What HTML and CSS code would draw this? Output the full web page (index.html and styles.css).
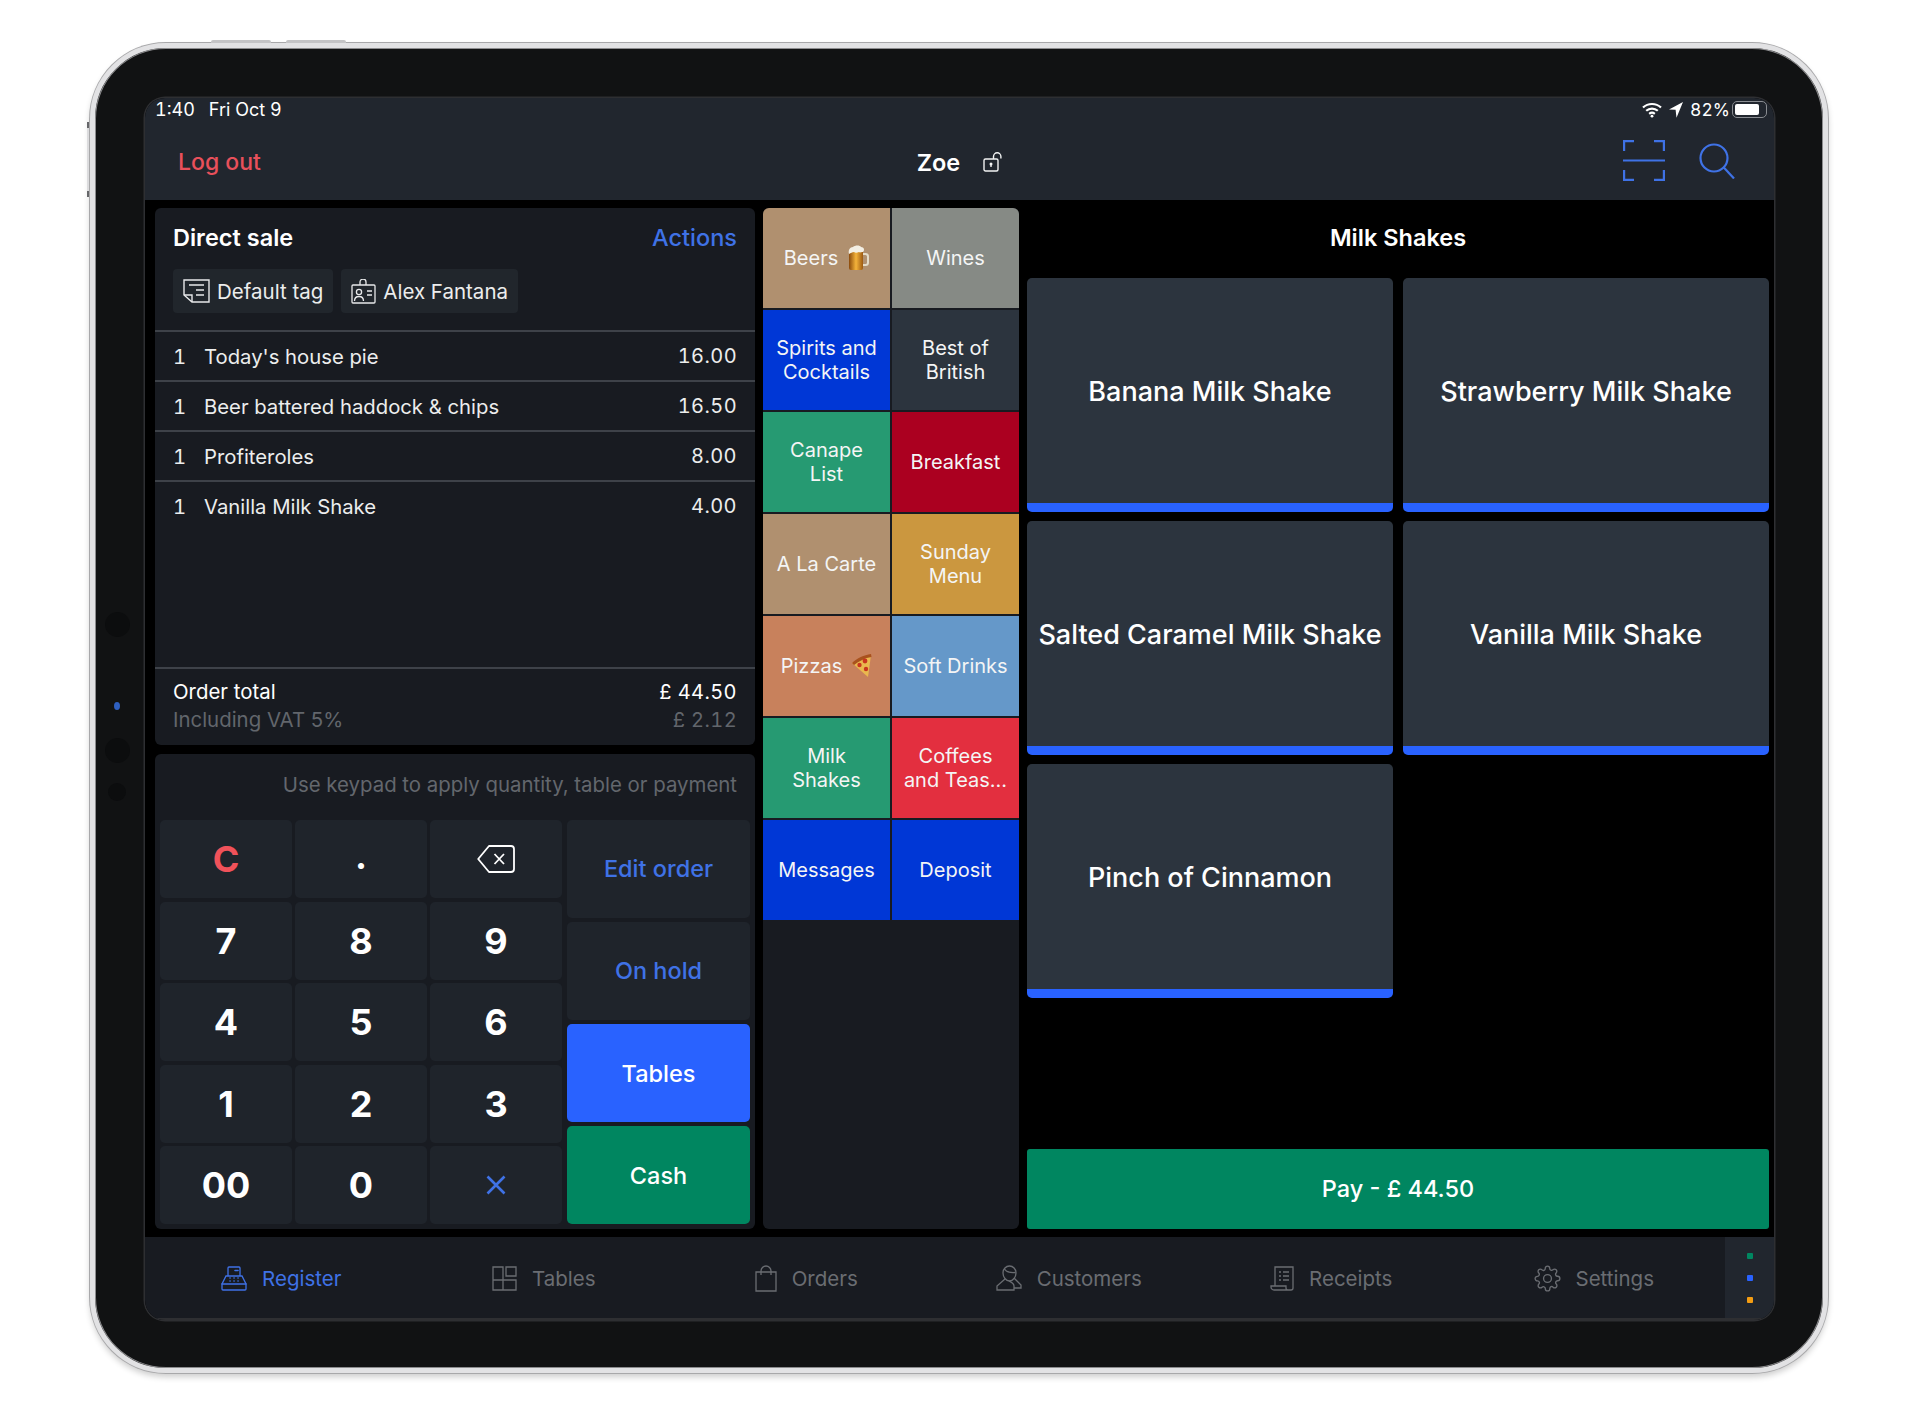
FILE: index.html
```html
<!DOCTYPE html>
<html lang="en">

<head>
    <meta charset="UTF-8">
    <meta name="viewport" content="width=device-width, initial-scale=1.0">
    <title>Register</title>
    <link rel="stylesheet" href="styles.css">
</head>

<body>
    <div class="ipad">
        <span class="hw-btn hw-top hw-top1"></span>
        <span class="hw-btn hw-top hw-top2"></span>
        <span class="hw-btn hw-left"></span>
        <span class="sensor sensor1"></span>
        <span class="sensor sensor2"></span>
        <span class="sensor sensor3"></span>
        <span class="sensor-cam"></span>

        <div class="screen">
            <header class="top">
                <div class="status">
                    <div class="status-time"><span>1:40</span><span>Fri Oct 9</span></div>
                    <div class="status-right">
                        <svg width="20" height="16" viewBox="0 0 20 16" fill="none" stroke="#fff" stroke-width="2.2">
                            <path d="M1 5.5C6 .8 14 .8 19 5.5" />
                            <path d="M4.2 8.8c3.3-3 8.3-3 11.6 0" />
                            <path d="M7.2 11.8c1.6-1.3 4-1.3 5.6 0" />
                            <circle cx="10" cy="14.2" r="1.4" fill="#fff" stroke="none" />
                        </svg>
                        <svg class="status-arrow" width="14" height="16" viewBox="0 0 14 16" fill="#fff">
                            <path d="M14 0 0 7.4l6.6.4.9 8z" />
                        </svg>
                        <span>82%</span>
                        <span class="battery"><span class="battery-fill"></span></span>
                    </div>
                </div>
                <nav class="nav">
                    <a class="logout">Log out</a>
                    <div class="user">
                        <span>Zoe</span>
                        <svg width="20" height="20" viewBox="0 0 20 20" fill="none" stroke="#f2f3f3" stroke-width="1.4">
                            <rect x="1" y="7" width="14" height="12" rx="1.5" />
                            <path d="M10.5 7V4.5a3.7 3.7 0 0 1 7.4 0v2" />
                            <circle cx="8" cy="12" r="1.5" fill="#f2f3f3" stroke="none" />
                            <path d="M8 12v3" />
                        </svg>
                    </div>
                    <div class="nav-icons">
                        <svg width="42" height="41" viewBox="0 0 42 41" fill="none" stroke="#3f72e6" stroke-width="2.2">
                            <path d="M1.100 11V1.100H11M31 1.100h9.900V11M1.100 30v9.900H11M31 39.900h9.900V30" />
                            <path d="M0 20.500h42" />
                        </svg>
                        <svg width="36" height="36" viewBox="0 0 36 36" fill="none" stroke="#3f72e6" stroke-width="2.2">
                            <circle cx="15" cy="15" r="13.5" />
                            <path d="M24.800 24.500 35 35.500" />
                        </svg>
                    </div>
                </nav>
            </header>

            <main class="main">
                <div class="left-col">
                    <section class="order">
                        <div class="order-head">
                            <div class="order-title">
                                <b>Direct sale</b>
                                <a class="link">Actions</a>
                            </div>
                            <div class="chips">
                                <span class="chip">
                                    <svg width="27" height="24" viewBox="0 0 27 24" fill="none" stroke="#e8e9ea" stroke-width="1.4">
                                        <path d="M1 1h25v22H9l-8-7z" />
                                        <path d="M1 16h8v7" />
                                        <path d="M6 6h15M13 11h8M13 16h8" />
                                    </svg>
                                    Default tag
                                </span>
                                <span class="chip">
                                    <svg width="25" height="25" viewBox="0 0 25 25" fill="none" stroke="#e8e9ea" stroke-width="1.3">
                                        <rect x="1" y="6" width="23" height="18" rx="1" />
                                        <path d="M9 6V3a3 3 0 0 1 6 0v3" />
                                        <circle cx="8" cy="13" r="2.6" />
                                        <path d="M3.500 22c0-6 9-6 9 0M16 12h5M16 16h5" />
                                    </svg>
                                    Alex Fantana
                                </span>
                            </div>
                        </div>
                        <ul class="lines">
                            <li><span class="qty">1</span><span class="name">Today's house pie</span><span class="num">16.00</span></li>
                            <li><span class="qty">1</span><span class="name">Beer battered haddock &amp; chips</span><span class="num">16.50</span></li>
                            <li><span class="qty">1</span><span class="name">Profiteroles</span><span class="num">8.00</span></li>
                            <li><span class="qty">1</span><span class="name">Vanilla Milk Shake</span><span class="num">4.00</span></li>
                        </ul>
                        <div class="totals">
                            <div class="total-row"><span>Order total</span><span class="num">£ 44.50</span></div>
                            <div class="total-row muted"><span>Including VAT 5%</span><span class="num">£ 2.12</span></div>
                        </div>
                    </section>

                    <section class="pad">
                        <div class="hint">Use keypad to apply quantity, table or payment</div>
                        <div class="pad-body">
                            <div class="keys">
                                <button class="key key-red">C</button>
                                <button class="key key-dot">.</button>
                                <button class="key">
                                    <svg width="38" height="28" viewBox="0 0 38 28" fill="none" stroke="#fff" stroke-width="1.8">
                                        <path d="M12 1h22a3 3 0 0 1 3 3v20a3 3 0 0 1-3 3H12L1.200 14z" stroke-linejoin="round" />
                                        <path d="m17.500 9 9.500 10M27 9l-9.500 10" />
                                    </svg>
                                </button>
                                <button class="key">7</button>
                                <button class="key">8</button>
                                <button class="key">9</button>
                                <button class="key">4</button>
                                <button class="key">5</button>
                                <button class="key">6</button>
                                <button class="key">1</button>
                                <button class="key">2</button>
                                <button class="key">3</button>
                                <button class="key">00</button>
                                <button class="key">0</button>
                                <button class="key">
                                    <svg width="20" height="20" viewBox="0 0 20 20" fill="none" stroke="#3f72e6" stroke-width="2.6">
                                        <path d="m1.500 1.500 17 17M18.500 1.500l-17 17" />
                                    </svg>
                                </button>
                            </div>
                            <div class="actions">
                                <button class="action action-link">Edit order</button>
                                <button class="action action-link">On hold</button>
                                <button class="action action-blue">Tables</button>
                                <button class="action action-green">Cash</button>
                            </div>
                        </div>
                    </section>
                </div>

                <section class="cats">
                    <div class="cat c-tan">Beers
                        <svg width="21" height="26" viewBox="0 0 21 26">
                            <defs>
                                <linearGradient id="beer" x1="0" y1="0" x2="1" y2="0">
                                    <stop offset="0" stop-color="#8a4a0c" />
                                    <stop offset=".5" stop-color="#f4b33a" />
                                    <stop offset="1" stop-color="#9c5a12" />
                                </linearGradient>
                            </defs>
                            <path d="M14 9h3.500a2.500 2.500 0 0 1 2.500 2.500v6a2.500 2.500 0 0 1-2.500 2.500H14" fill="none" stroke="#e4dcc8" stroke-width="2" />
                            <rect x="1" y="5" width="14" height="20" rx="2" fill="url(#beer)" />
                            <path d="M1 9C0 5 2 2 5 2c2-2 7-2 8 0 3 0 4 3 2 5-2 0-3 1-4 0-2 1-4 1-5 0-2 0-3 1-5 2z" fill="#f3efe4" />
                        </svg>
                    </div>
                    <div class="cat c-grey">Wines</div>
                    <div class="cat c-blue">Spirits and Cocktails</div>
                    <div class="cat c-slate">Best of British</div>
                    <div class="cat c-green">Canape<br>List</div>
                    <div class="cat c-crimson">Breakfast</div>
                    <div class="cat c-tan">A La Carte</div>
                    <div class="cat c-gold">Sunday<br>Menu</div>
                    <div class="cat c-clay">Pizzas
                        <svg width="20" height="24" viewBox="0 0 20 24">
                            <path d="M0 9 19 1l-3 22z" fill="#e9b84e" />
                            <path d="M0 9C5 4 12 1 19 0l.5 3C13 4 7 7 2 11z" fill="#a9521d" />
                            <circle cx="13" cy="7" r="2.4" fill="#c9351f" />
                            <circle cx="7.500" cy="11" r="2.2" fill="#c9351f" />
                            <circle cx="14" cy="15" r="2.2" fill="#c9351f" />
                        </svg>
                    </div>
                    <div class="cat c-sky">Soft Drinks</div>
                    <div class="cat c-green">Milk<br>Shakes</div>
                    <div class="cat c-red">Coffees<br>and Teas...</div>
                    <div class="cat c-blue">Messages</div>
                    <div class="cat c-blue">Deposit</div>
                </section>

                <section class="products">
                    <h2 class="products-title">Milk Shakes</h2>
                    <div class="product-grid">
                        <button class="product">Banana Milk Shake</button>
                        <button class="product">Strawberry Milk Shake</button>
                        <button class="product">Salted Caramel Milk Shake</button>
                        <button class="product">Vanilla Milk Shake</button>
                        <button class="product">Pinch of Cinnamon</button>
                    </div>
                    <button class="pay">Pay - £ 44.50</button>
                </section>
            </main>

            <footer class="tabbar">
                <div class="tabs">
                    <a class="tab tab-active">
                        <svg width="26" height="25" viewBox="0 0 26 25" fill="none" stroke="currentColor" stroke-width="1.3">
                            <path d="M7 10V2a1 1 0 0 1 1-1h10a1 1 0 0 1 1 1v8" />
                            <path d="M7 10H5L1 18v5a1 1 0 0 0 1 1h22a1 1 0 0 0 1-1v-5l-4-8h-2z" />
                            <path d="M1 18h24M14 4.500h3M9 12h.1M13 12h.1M17 12h.1M9 15h.1M13 15h.1M17 15h.1" stroke-linecap="round" stroke-width="1.6" />
                        </svg>
                        Register
                    </a>
                    <a class="tab">
                        <svg width="25" height="25" viewBox="0 0 25 25" fill="none" stroke="currentColor" stroke-width="1.3">
                            <path d="M1 1h10v13H1zM14 1h10v9H14zM1 14h10v10H1zM11 14h13v10H11z" />
                        </svg>
                        Tables
                    </a>
                    <a class="tab">
                        <svg width="22" height="27" viewBox="0 0 22 27" fill="none" stroke="currentColor" stroke-width="1.3">
                            <path d="M1 7h20v19H1z" />
                            <path d="M6 10V6a5 5 0 0 1 10 0v4" />
                        </svg>
                        Orders
                    </a>
                    <a class="tab">
                        <svg width="26" height="26" viewBox="0 0 26 26" fill="none" stroke="currentColor" stroke-width="1.3">
                            <path d="M7 8a6.500 7 0 1 1 13 0c0 4-3 8-6.500 8S7 12 7 8z" />
                            <path d="M9 14 1 21v4h17v-4c0-3-3-4-5-5" />
                            <path d="M8.500 4c2 3 6 4 11 3.500M18 13l7 7v3h-7" />
                        </svg>
                        Customers
                    </a>
                    <a class="tab">
                        <svg width="24" height="25" viewBox="0 0 24 25" fill="none" stroke="currentColor" stroke-width="1.3">
                            <path d="M5 20V1h18v21a2 2 0 0 1-2 2H4a3 3 0 0 1-3-3v-1h15v2a2 2 0 0 0 2 2" />
                            <path d="M9 6h2M13 6h6M9 10h2M13 10h6M9 14h2M13 14h6" />
                        </svg>
                        Receipts
                    </a>
                    <a class="tab">
                        <svg width="27" height="27" viewBox="0 0 24 24" fill="none" stroke="currentColor" stroke-width="1.2">
                            <circle cx="12" cy="12" r="3.5" />
                            <path d="M19.400 15a1.650 1.650 0 0 0 .33 1.820l.06.06a2 2 0 0 1 0 2.830 2 2 0 0 1-2.830 0l-.06-.06a1.650 1.650 0 0 0-1.820-.33 1.650 1.650 0 0 0-1 1.510V21a2 2 0 0 1-2 2 2 2 0 0 1-2-2v-.09A1.650 1.650 0 0 0 9 19.400a1.650 1.650 0 0 0-1.820.33l-.06.06a2 2 0 0 1-2.830 0 2 2 0 0 1 0-2.830l.06-.06a1.650 1.650 0 0 0 .33-1.820 1.650 1.650 0 0 0-1.510-1H3a2 2 0 0 1-2-2 2 2 0 0 1 2-2h.09A1.650 1.650 0 0 0 4.600 9a1.650 1.650 0 0 0-.33-1.820l-.06-.06a2 2 0 0 1 0-2.830 2 2 0 0 1 2.830 0l.06.06a1.650 1.650 0 0 0 1.820.33H9a1.650 1.650 0 0 0 1-1.510V3a2 2 0 0 1 2-2 2 2 0 0 1 2 2v.09a1.650 1.650 0 0 0 1 1.510 1.650 1.650 0 0 0 1.820-.33l.06-.06a2 2 0 0 1 2.830 0 2 2 0 0 1 0 2.830l-.06.06a1.650 1.650 0 0 0-.33 1.820V9a1.650 1.650 0 0 0 1.510 1H21a2 2 0 0 1 2 2 2 2 0 0 1-2 2h-.09a1.650 1.650 0 0 0-1.510 1z" />
                        </svg>
                        Settings
                    </a>
                </div>
                <div class="dots">
                    <span class="dot dot-green"></span>
                    <span class="dot dot-blue"></span>
                    <span class="dot dot-orange"></span>
                </div>
            </footer>
        </div>
    </div>
</body>

</html>
```

FILE: styles.css
```css
* {
    box-sizing: border-box;
}

body {
    margin: 0;
    height: 1419px;
    padding: 43px 92px 0 90px;
    background: #fff;
    font-family: Inter, "Noto Sans", sans-serif;
    color: #fff;
    overflow: hidden;
}

button {
    font-family: inherit;
    color: inherit;
    border: none;
    padding: 0;
    cursor: pointer;
}

/* device */
.ipad {
    position: relative;
    width: 1738px;
    height: 1330px;
    padding: 50px 49px 48px 50px;
    background: #111213;
    border: 5px solid #e2e2e4;
    border-radius: 76px;
    box-shadow: 0 0 0 1px #a8a8aa, inset 0 0 0 1px #8c8c8e, 0 4px 6px rgba(0, 0, 0, .2);
}

.hw-btn {
    position: absolute;
}

.hw-top {
    top: -8px;
    height: 3px;
    width: 60px;
    border-radius: 2px 2px 0 0;
    background: #c4c4c6;
}

.hw-top1 {
    left: 116px;
}

.hw-top2 {
    left: 191px;
}

.hw-left {
    left: -8px;
    top: 74px;
    width: 2px;
    height: 75px;
    background: linear-gradient(#66676a 8%, #dcdcde 8%, #dcdcde 92%, #66676a 92%);
}

.sensor {
    position: absolute;
    left: 10px;
    width: 25px;
    height: 25px;
    border-radius: 50%;
    background: #0c0d0e;
}

.sensor1 {
    top: 564px;
}

.sensor2 {
    top: 690px;
}

.sensor3 {
    top: 735px;
    left: 13px;
    width: 18px;
    height: 18px;
}

.sensor-cam {
    position: absolute;
    left: 19px;
    top: 654px;
    width: 6px;
    height: 8px;
    border-radius: 50%;
    background: #2e5fc0;
}

.screen {
    display: flex;
    flex-direction: column;
    width: 1629px;
    height: 1222px;
    border-radius: 20px;
    background: #000;
    overflow: hidden;
    box-shadow: 0 0 0 1.5px #2e2f32;
}

/* top bars */
.top {
    height: 102px;
    background: #21262e;
}

.status {
    display: flex;
    justify-content: space-between;
    align-items: center;
    height: 26px;
    padding: 0 7px 3px 10px;
    font-size: 18px;
    font-variant-numeric: tabular-nums;
}

.status-time {
    display: flex;
    gap: 14px;
}

.status-right {
    display: flex;
    align-items: center;
    gap: 7px;
    font-size: 17.5px;
}

.battery {
    width: 35px;
    height: 17px;
    margin-left: -5px;
    padding: 2px;
    border: 1px solid #8a8d92;
    border-radius: 5px;
}

.battery-fill {
    display: block;
    width: 82%;
    height: 100%;
    background: #fff;
    border-radius: 2px;
}

.nav {
    display: grid;
    grid-template-columns: 1fr auto 1fr;
    align-items: center;
    height: 76px;
    padding: 0 39px 0 33px;
}

.logout {
    font-size: 23px;
    font-weight: 500;
    color: #e8505b;
}

.user {
    display: flex;
    align-items: center;
    gap: 23px;
    margin-left: 7px;
    font-size: 23.5px;
    font-weight: 600;
}

.nav-icons {
    display: flex;
    justify-content: flex-end;
    align-items: center;
    gap: 34px;
    padding-bottom: 3px;
}

/* layout */
.main {
    flex: 1;
    display: grid;
    grid-template-columns: 600px 256px 742px;
    gap: 8px;
    padding: 8px 5px 8px 10px;
    min-height: 0;
}

.left-col {
    display: flex;
    flex-direction: column;
    gap: 9px;
}

/* order */
.order {
    flex: 1;
    display: flex;
    flex-direction: column;
    background: #181b21;
    border-radius: 6px;
}

.order-head {
    padding: 16px 18px 17px 18px;
}

.order-title {
    display: flex;
    justify-content: space-between;
    line-height: 28px;
    font-size: 23.5px;
}

.order-title b {
    font-weight: 600;
}

.link {
    font-weight: 500;
    color: #3f72e6;
}

.chips {
    display: flex;
    gap: 8px;
    margin-top: 17px;
}

.chip {
    display: flex;
    align-items: center;
    gap: 7px;
    height: 44px;
    padding: 0 10px;
    border-radius: 4px;
    background: #21262c;
    font-size: 20.5px;
    color: #eceded;
}

.lines {
    flex: 1;
    margin: 0;
    padding: 0;
    list-style: none;
}

.lines li {
    display: flex;
    align-items: center;
    height: 50px;
    padding: 0 18px;
    border-top: 2px solid #3e4249;
    font-size: 20.3px;
    color: #eceded;
}

.num,
.qty {
    font-variant-numeric: tabular-nums;
    letter-spacing: .4px;
}

.num {
    font-size: 20px;
}

.qty {
    width: 31px;
}

.name {
    flex: 1;
}

.totals {
    padding: 9px 18px 11px;
    border-top: 2px solid #3e4249;
}

.total-row {
    display: flex;
    justify-content: space-between;
    line-height: 28px;
    font-size: 20.4px;
}

.muted {
    color: #62666c;
}

/* keypad */
.pad {
    height: 475px;
    background: #181b21;
    border-radius: 6px;
}

.hint {
    height: 66px;
    padding: 18px 18px 0 0;
    text-align: right;
    font-size: 20.4px;
    line-height: 26px;
    color: #63676d;
}

.pad-body {
    display: flex;
    gap: 5px;
    padding: 0 5px;
}

.keys {
    display: grid;
    grid-template-columns: repeat(3, 1fr);
    grid-auto-rows: 78px;
    gap: 3.5px 3px;
    width: 402px;
}

.key {
    display: flex;
    align-items: center;
    justify-content: center;
    background: #1f242b;
    border-radius: 5px;
    font-size: 36px;
    font-weight: 700;
}

.key-red {
    color: #f0525a;
}

.key-dot {
    padding-bottom: 6px;
}

.actions {
    display: grid;
    grid-auto-rows: 98px;
    gap: 4px;
    width: 183px;
}

.action {
    border-radius: 5px;
    font-size: 23.5px;
    font-weight: 500;
}

.action-link {
    padding-bottom: 2px;
    background: #1f242b;
    color: #3f72e6;
}

.action-blue {
    background: #2962ff;
}

.action-green {
    background: #008660;
}

/* categories */
.cats {
    display: grid;
    grid-template-columns: 1fr 1fr;
    grid-auto-rows: 100px;
    gap: 2px;
    background: #181b21;
    border-radius: 6px;
    overflow: hidden;
    align-content: start;
}

.cat {
    display: flex;
    align-items: center;
    justify-content: center;
    gap: 10px;
    padding: 0 10px;
    text-align: center;
    font-size: 20px;
    line-height: 24px;
    color: #f4f5f5;
}

.c-tan {
    background: #b0906f;
}

.c-grey {
    background: #868a85;
}

.c-blue {
    background: #0037d6;
}

.c-slate {
    background: #2c343e;
}

.c-green {
    background: #269a72;
}

.c-crimson {
    background: #ab0020;
}

.c-gold {
    background: #cb973f;
}

.c-clay {
    background: #c8815c;
}

.c-sky {
    background: #6598c9;
}

.c-red {
    background: #e32f3f;
}

/* products */
.products {
    display: flex;
    flex-direction: column;
}

.products-title {
    height: 70px;
    margin: 0;
    padding-top: 16px;
    text-align: center;
    font-size: 23.5px;
    font-weight: 600;
    line-height: 28px;
}

.product-grid {
    flex: 1;
    display: grid;
    grid-template-columns: 366px 366px;
    grid-auto-rows: 234px;
    gap: 9px 10px;
}

.product {
    padding-top: 2px;
    border-radius: 5px;
    border-bottom: 9px solid #2962ff;
    background: #2c343e;
    font-size: 27px;
    font-weight: 500;
}

.pay {
    height: 80px;
    padding-bottom: 2px;
    border-radius: 3px;
    background: #008660;
    font-size: 23.5px;
    font-weight: 500;
}

/* tab bar */
.tabbar {
    display: flex;
    height: 83px;
    background: #181b21;
    border-bottom: 2px solid #2e2f32;
}

.tabs {
    flex: 1;
    display: grid;
    grid-template-columns: repeat(6, 1fr);
    padding: 1px 0 0 5px;
}

.tab {
    display: flex;
    align-items: center;
    justify-content: center;
    gap: 15px;
    font-size: 20.5px;
    color: #6a6d72;
}

.tab-active {
    color: #3f72e6;
}

.dots {
    display: flex;
    flex-direction: column;
    align-items: center;
    justify-content: center;
    gap: 16px;
    width: 49px;
    background: #21262e;
}

.dot {
    width: 6px;
    height: 6px;
    border-radius: 1px;
}

.dot-green {
    background: #008660;
}

.dot-blue {
    background: #2962ff;
}

.dot-orange {
    background: #f39c12;
}
```
